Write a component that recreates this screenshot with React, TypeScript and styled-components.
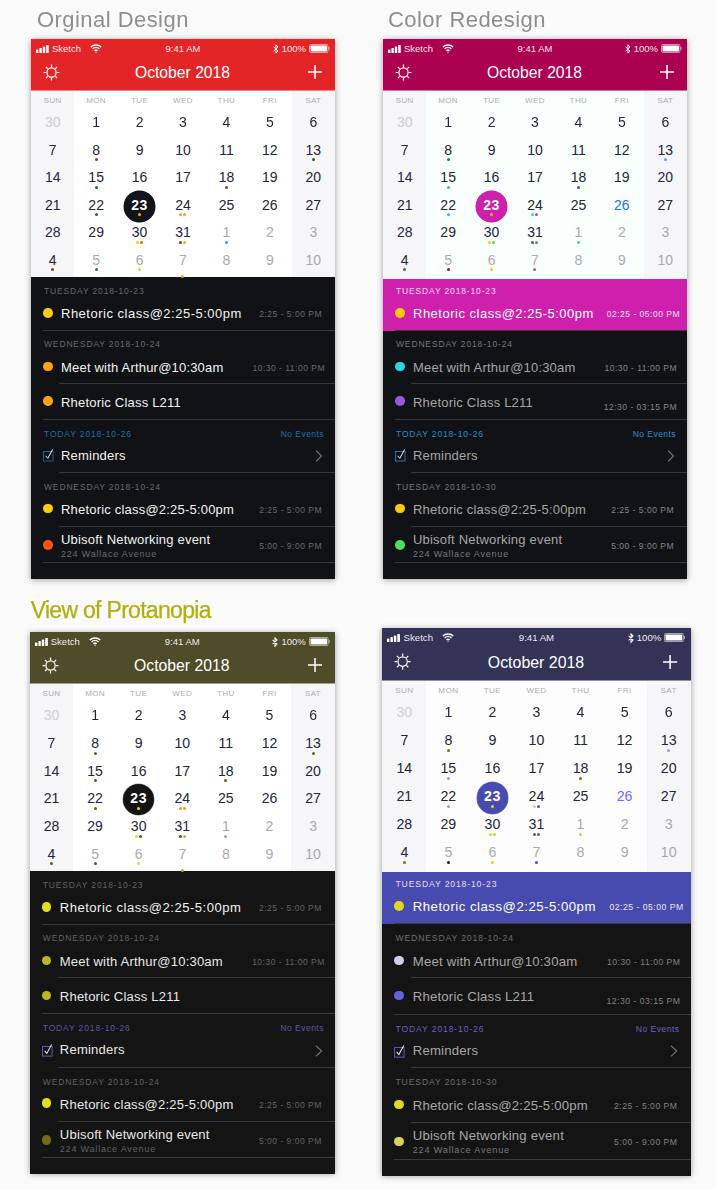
import React from 'react';
import styled, { createGlobalStyle, ThemeProvider } from 'styled-components';

type Palette = {
  bar: string;
  panel: string;
  line: string;
  accent: string;
  todayBg: string;
  todayRing: string;
  highlight: string;
  calBg: string;
  title: string;
  time: string;
  head: string;
  sub: string;
  check: string;
};

declare module 'styled-components' {
  export interface DefaultTheme extends Palette {}
}

const FONT = '"Liberation Sans", Arial, sans-serif';

const Global = createGlobalStyle`
  html, body { margin: 0; padding: 0; background: #fafafa; }
  body { font-family: ${FONT}; overflow: hidden; }
`;

const Page = styled.main`
  display: grid;
  grid-template-columns: 382px 1fr;
  grid-template-rows: 590px 600px;
  width: 716px;
  height: 1190px;
  background: #fafafa;
`;

const Cell = styled.section<{ $left: number; $top?: number }>`
  padding-left: ${p => p.$left}px;
  padding-top: ${p => p.$top ?? 0}px;
`;

const Heading = styled.h2<{ $indent: number }>`
  margin: 0 0 0 ${p => p.$indent}px;
  height: 39px;
  font-size: 22px;
  line-height: 40px;
  font-weight: 400;
  letter-spacing: 0.45px;
  color: #8e8e8e;
  filter: blur(0.3px);
`;

const LimeHeading = styled(Heading)`
  height: 42px;
  line-height: 40px;
  font-size: 23px;
  letter-spacing: -0.7px;
  color: #aeb00c;
  -webkit-text-stroke: 0.25px #aeb00c;
`;

const Phone = styled.article<{ $zoom: number; $blur: number }>`
  display: flex;
  flex-direction: column;
  width: 304px;
  height: 540px;
  overflow: hidden;
  zoom: ${p => p.$zoom};
  filter: blur(${p => p.$blur}px);
  box-shadow: 0 1px 6px rgba(0, 0, 0, 0.38);
`;

const TopBar = styled.header`
  background: ${p => p.theme.bar};
  color: #fff;
  border-bottom: 1px solid rgba(255, 255, 255, 0.45);
`;

const StatusBar = styled.div`
  display: grid;
  grid-template-columns: 1fr auto 1fr;
  align-items: center;
  height: 19px;
  padding: 0 5px 0 5px;
  font-size: 9.5px;
  color: rgba(255, 255, 255, 0.92);
`;

const StatusLeft = styled.div`
  display: flex;
  align-items: center;
  gap: 2px;
`;

const StatusRight = styled.div`
  display: flex;
  align-items: center;
  justify-content: flex-end;
  gap: 3px;
`;

const WifiSlot = styled.span`
  display: flex;
  margin-left: 7px;
`;

const Nav = styled.div`
  display: grid;
  grid-template-columns: 1fr auto 1fr;
  align-items: center;
  height: 28px;
  padding: 0 13px 4px 12px;
`;

const NavTitle = styled.h1`
  margin: 0;
  padding-top: 2px;
  font-size: 15.7px;
  font-weight: 400;
  line-height: 20px;
`;

const PlusSlot = styled.span`
  display: flex;
  justify-content: flex-end;
`;

const Calendar = styled.div<{ $last: number }>`
  display: grid;
  grid-template-columns: repeat(7, 1fr);
  grid-template-rows: 17px repeat(5, 27.6px) ${p => p.$last}px;
  flex: none;
`;

const Weekday = styled.div<{ $weekend: boolean }>`
  padding-top: 5px;
  text-align: center;
  font-size: 8px;
  line-height: 10px;
  letter-spacing: 0.4px;
  color: #adadb1;
  background: ${p => (p.$weekend ? '#f6f6f8' : p.theme.calBg)};
`;

const Day = styled.div<{ $weekend: boolean; $today: boolean }>`
  position: relative;
  z-index: ${p => (p.$today ? 1 : 0)};
  display: flex;
  flex-direction: column;
  align-items: center;
  padding-top: 4px;
  background: ${p => (p.$weekend ? '#f6f6f8' : p.theme.calBg)};

  ${p =>
    p.$today
      ? `&::before {
          content: '';
          position: absolute;
          left: 50%;
          top: 0;
          width: 31px;
          height: 31px;
          margin-left: -15.5px;
          border-radius: 50%;
          background: ${p.theme.todayBg};
          box-shadow: 0 0 0 0.5px ${p.theme.todayRing};
        }`
      : ''}
`;

const DayNum = styled.span<{ $tone: string; $today: boolean }>`
  position: relative;
  font-size: 14px;
  line-height: 20px;
  font-weight: ${p => (p.$today ? 700 : 400)};
  letter-spacing: ${p => (p.$today ? '0.5px' : '0')};
  color: ${p => p.$tone};
`;

const Marks = styled.span<{ $low: boolean }>`
  position: relative;
  display: flex;
  gap: 1px;
  height: 3px;
  margin-top: ${p => (p.$low ? 5 : -1.5)}px;
`;

const Mark = styled.i<{ $color: string }>`
  display: block;
  width: 3px;
  height: 3px;
  border-radius: 50%;
  background: ${p => p.$color};
`;

const Panel = styled.div`
  flex: 1;
  background: ${p => p.theme.panel};
`;

const Group = styled.div<{ $hot: boolean }>`
  background: ${p => (p.$hot ? p.theme.highlight : 'transparent')};
`;

const GroupHead = styled.div<{ $pad: number; $tone: string }>`
  display: flex;
  justify-content: space-between;
  padding: ${p => p.$pad}px 11px 0 13px;
  font-size: 8.5px;
  line-height: 14px;
  letter-spacing: 0.85px;
  color: ${p => p.$tone};
`;

const NoEvents = styled.span`
  letter-spacing: 0.45px;
`;

const Row = styled.div<{ $full: boolean }>`
  display: flex;
  margin-left: 12px;
  border-bottom: ${p => (p.$full ? `1px solid ${p.theme.line}` : 'none')};
`;

const Marker = styled.div<{ $top: number; $bottom: number }>`
  display: flex;
  align-items: center;
  flex: none;
  width: 16px;
  padding: ${p => p.$top}px 0 ${p => p.$bottom}px;
`;

const Dot = styled.span<{ $color: string }>`
  display: block;
  width: 9.5px;
  height: 9.5px;
  border-radius: 50%;
  background: ${p => p.$color};
`;

const Body = styled.div<{ $full: boolean; $top: number; $bottom: number }>`
  flex: 1;
  display: flex;
  align-items: center;
  justify-content: space-between;
  padding: ${p => p.$top}px 0 ${p => p.$bottom}px 2px;
  border-bottom: ${p => (p.$full ? 'none' : `1px solid ${p.theme.line}`)};
`;

const Texts = styled.div`
  display: flex;
  flex-direction: column;
`;

const Title = styled.span<{ $wide: boolean; $tone: string }>`
  font-size: 13px;
  line-height: 18px;
  letter-spacing: ${p => (p.$wide ? 0.5 : 0.2)}px;
  color: ${p => p.$tone};
  white-space: nowrap;
`;

const Sub = styled.span`
  font-size: 9px;
  line-height: 10px;
  letter-spacing: 0.8px;
  color: ${p => p.theme.sub};
`;

const Time = styled.span<{ $right: number; $drop: number; $tone: string }>`
  margin: 0 ${p => p.$right}px ${p => -p.$drop}px 0;
  padding-top: ${p => p.$drop}px;
  font-size: 8.5px;
  line-height: 12px;
  letter-spacing: 0.5px;
  color: ${p => p.$tone};
  white-space: nowrap;
`;

const ChevronSlot = styled.span`
  display: flex;
  margin-right: 12px;
`;

const Signal = () => (
  <svg width="14" height="8" viewBox="0 0 14 8" fill="#fff">
    <rect x="0" y="4.5" width="2.4" height="3.5" rx="0.6" />
    <rect x="3.4" y="3" width="2.4" height="5" rx="0.6" />
    <rect x="6.8" y="1.5" width="2.4" height="6.5" rx="0.6" />
    <rect x="10.2" y="0" width="2.6" height="8" rx="0.6" />
  </svg>
);

const Wifi = () => (
  <svg width="12" height="9" viewBox="0 0 12 9" fill="none" stroke="#fff" strokeWidth="1.3">
    <path d="M0.8 3 C3.6 0.3 8.4 0.3 11.2 3" />
    <path d="M2.6 4.9 C4.5 3.2 7.5 3.2 9.4 4.9" />
    <path d="M4.4 6.7 C5.3 5.9 6.7 5.9 7.6 6.7" />
    <circle cx="6" cy="8" r="0.7" fill="#fff" stroke="none" />
  </svg>
);

const Bluetooth = () => (
  <svg width="6" height="10" viewBox="0 0 6 10" fill="none" stroke="#fff" strokeWidth="1">
    <path d="M0.6 2.8 L5 7 L3 9.2 V0.8 L5 3 L0.6 7.2" />
  </svg>
);

const Battery = () => (
  <svg width="21" height="9" viewBox="0 0 21 9">
    <rect x="0.5" y="0.5" width="18.5" height="8" rx="1.5" fill="none" stroke="rgba(255,255,255,0.55)" />
    <rect x="1.5" y="1.5" width="16.5" height="6" rx="0.8" fill="#fff" />
    <rect x="19.6" y="3" width="1" height="3" fill="rgba(255,255,255,0.6)" />
  </svg>
);

const Sun = () => (
  <svg width="17" height="17" viewBox="0 0 17 17" fill="none" stroke="#fff" strokeWidth="1.2">
    <circle cx="8.5" cy="8.5" r="4.6" />
    <path d="M8.5 0.6 V3.2 M8.5 13.8 V16.4 M0.6 8.5 H3.2 M13.8 8.5 H16.4 M2.9 2.9 L4.8 4.8 M12.2 12.2 L14.1 14.1 M14.1 2.9 L12.2 4.8 M4.8 12.2 L2.9 14.1" />
  </svg>
);

const Plus = () => (
  <svg width="14" height="14" viewBox="0 0 14 14" fill="none" stroke="#fff" strokeWidth="1.5">
    <path d="M7 0 V14 M0 7 H14" />
  </svg>
);

const CheckBox = ({ color }: { color: string }) => (
  <svg width="12" height="14" viewBox="0 0 12 14" fill="none">
    <rect x="0.5" y="3.5" width="9.5" height="9.5" stroke={color} strokeWidth="1" />
    <path d="M2.6 7.8 L4.8 10.4 L9.6 1.4" stroke="#eee" strokeWidth="1" />
  </svg>
);

const Chevron = () => (
  <svg width="8" height="12" viewBox="0 0 8 12" fill="none" stroke="#6d7075" strokeWidth="1.2">
    <path d="M1 0.8 L6.6 6 L1 11.2" />
  </svg>
);

const WEEK = ['SUN', 'MON', 'TUE', 'WED', 'THU', 'FRI', 'SAT'];

const DAYS: { n: number; key: string; tone?: 'faint' | 'muted' }[] = [
  { n: 30, key: 's30', tone: 'faint' },
  ...Array.from({ length: 31 }, (_, i) => ({ n: i + 1, key: String(i + 1) })),
  { n: 1, key: 'n1', tone: 'muted' as const },
  { n: 2, key: 'n2', tone: 'muted' as const },
  { n: 3, key: 'n3', tone: 'muted' as const },
  { n: 4, key: 'n4' },
  { n: 5, key: 'n5', tone: 'muted' as const },
  { n: 6, key: 'n6', tone: 'muted' as const },
  { n: 7, key: 'n7', tone: 'muted' as const },
  { n: 8, key: 'n8', tone: 'muted' as const },
  { n: 9, key: 'n9', tone: 'muted' as const },
  { n: 10, key: 'n10', tone: 'muted' as const },
];

type Spec = {
  palette: Palette;
  redesign: boolean;
  zoom: number;
  blur: number;
  blue?: string;
  marks: Record<string, string[]>;
  dots: string[];
};

const marksFrom = (
  a: string, b: string, t: string, c24: string[], c30: string[], c31: string[],
  n1: string, n4: string, n5: string, n6: string, n7: string, c13: string,
): Record<string, string[]> => ({
  '8': [a], '13': [c13], '15': [b], '18': [a], '22': [b], '23': [t],
  '24': c24, '30': c30, '31': c31, n1: [n1], n4: [n4], n5: [n5], n6: [n6], n7: [n7],
});

const SPECS: Spec[] = [
  {
    palette: {
      bar: '#e42528', panel: '#101215', line: '#36383c', accent: '#1d6fae', todayBg: '#11141a', todayRing: '#11141a',
      highlight: '#cf1fad', calBg: '#ffffff', title: '#f2f2f2', time: '#68696d', head: '#68696d', sub: '#6a6b6f', check: '#1f5f96',
    },
    redesign: false, zoom: 1, blur: 0.25,
    marks: marksFrom('#7c4a0e', '#1f6b12', '#f7b500', ['#ffa40d', '#ffa40d'], ['#ffcc00', '#ff5a12'], ['#7c4a0e', '#ffa40d'], '#12a8f5', '#7c4a0e', '#2a55b5', '#ffcc00', '#ffa40d', '#1f6b12'),
    dots: ['#ffcc0d', '#ffa40d', '#ffa40d', '#ffcc0d', '#ff5211'],
  },
  {
    palette: {
      bar: '#ac0050', panel: '#101215', line: '#36383c', accent: '#2f8dd6', todayBg: '#cf1fad', todayRing: '#cf1fad',
      highlight: '#cf1fad', calBg: '#f8fffd', title: '#a6a6a6', time: '#858588', head: '#747578', sub: '#77787b', check: '#2a74b4',
    },
    redesign: true, zoom: 1, blur: 0.25, blue: '#1a6ff0',
    marks: marksFrom('#0a8a24', '#4aa8f5', '#ffa40d', ['#2ad5e8', '#9a55d8'], ['#ffc800', '#4ddc60'], ['#0a8a24', '#9a55d8'], '#4ddc60', '#0a8a24', '#b0004f', '#ffc800', '#9a55d8', '#4aa8f5'),
    dots: ['#ffc80d', '#2ad5e8', '#9a5ad8', '#ffc80d', '#4ddc60'],
  },
  {
    palette: {
      bar: '#4f4c2a', panel: '#141414', line: '#3a3a3c', accent: '#5a5aa8', todayBg: '#141414', todayRing: '#9a9a9a',
      highlight: '#474bb0', calBg: '#ffffff', title: '#e8e8e8', time: '#626265', head: '#626265', sub: '#626265', check: '#5a5ab4',
    },
    redesign: false, zoom: 1.004, blur: 0.5,
    marks: marksFrom('#6a6010', '#6a6010', '#e5dc20', ['#b8b820', '#b8b820'], ['#e0d820', '#5a5510'], ['#4a4610', '#b8b820'], '#9090ff', '#6a6010', '#4040c0', '#e5dc20', '#b0b020', '#6a6010'),
    dots: ['#e3dc22', '#bdb81f', '#bdb81f', '#e3dc22', '#716c12'],
  },
  {
    palette: {
      bar: '#333358', panel: '#141414', line: '#3a3a3c', accent: '#6264c4', todayBg: '#474bb0', todayRing: '#8a8ccc',
      highlight: '#474bb0', calBg: '#fdfdfd', title: '#a8a8a8', time: '#808083', head: '#6e6e70', sub: '#77777a', check: '#5a5ab4',
    },
    redesign: true, zoom: 1.0145, blur: 0.5, blue: '#6a6aff',
    marks: marksFrom('#7a7410', '#9a9aff', '#e0dc20', ['#c8c8e8', '#4a50d0'], ['#d8d030', '#d8d030'], ['#6a6410', '#4a50d0'], '#d0cc40', '#7a7410', '#1a1a40', '#d8d820', '#4a50d0', '#9a9aff'),
    dots: ['#dfd820', '#cfcfe8', '#6264d8', '#dfd820', '#d6d25a'],
  },
];

const PhoneView = ({ spec }: { spec: Spec }) => {
  const { palette: t, redesign, dots, marks } = spec;
  return (
    <ThemeProvider theme={t}>
      <Phone $zoom={spec.zoom} $blur={spec.blur}>
        <TopBar>
          <StatusBar>
            <StatusLeft>
              <Signal />
              <span>Sketch</span>
              <WifiSlot><Wifi /></WifiSlot>
            </StatusLeft>
            <span>9:41 AM</span>
            <StatusRight>
              <Bluetooth />
              <span>100%</span>
              <Battery />
            </StatusRight>
          </StatusBar>
          <Nav>
            <Sun />
            <NavTitle>October 2018</NavTitle>
            <PlusSlot><Plus /></PlusSlot>
          </Nav>
        </TopBar>

        <Calendar $last={redesign ? 33 : 31}>
          {WEEK.map((w, i) => (
            <Weekday key={w} $weekend={i === 0 || i === 6}>{w}</Weekday>
          ))}
          {DAYS.map((d, i) => {
            const col = i % 7;
            const today = d.key === '23';
            let tone = '#23253a';
            if (d.tone === 'faint') tone = '#cfcfd2';
            if (d.tone === 'muted') tone = '#a9a9ad';
            if (today) tone = '#ffffff';
            if (d.key === '26' && spec.blue) tone = spec.blue;
            const low = d.key === 'n7' && !redesign;
            return (
              <Day key={d.key} $weekend={col === 0 || col === 6} $today={today}>
                <DayNum $tone={tone} $today={today}>{d.n}</DayNum>
                {marks[d.key] && (
                  <Marks $low={low}>
                    {marks[d.key].map((c, j) => <Mark key={j} $color={c} />)}
                  </Marks>
                )}
              </Day>
            );
          })}
        </Calendar>

        <Panel>
          <Group $hot={redesign}>
            <GroupHead $pad={redesign ? 5 : 7} $tone={redesign ? '#f3dff0' : t.head}>
              <span>TUESDAY 2018-10-23</span>
            </GroupHead>
            <Row $full>
              <Marker $top={6} $bottom={8}><Dot $color={dots[0]} /></Marker>
              <Body $full $top={7} $bottom={7}>
                <Title $wide $tone={redesign ? '#ffffff' : '#f2f2f2'}>Rhetoric class@2:25-5:00pm</Title>
                {redesign
                  ? <Time $right={7} $drop={0} $tone="#f3e6f1">02:25 - 05:00 PM</Time>
                  : <Time $right={13} $drop={0} $tone={t.time}>2:25 - 5:00 PM</Time>}
              </Body>
            </Row>
          </Group>

          <Group $hot={false}>
            <GroupHead $pad={6} $tone={t.head}><span>WEDNESDAY 2018-10-24</span></GroupHead>
            <Row $full={false}>
              <Marker $top={6} $bottom={8}><Dot $color={dots[1]} /></Marker>
              <Body $full={false} $top={8} $bottom={6}>
                <Title $wide={false} $tone={t.title}>Meet with Arthur@10:30am</Title>
                <Time $right={10} $drop={0} $tone={t.time}>10:30 - 11:00 PM</Time>
              </Body>
            </Row>
            <Row $full>
              <Marker $top={8} $bottom={9}><Dot $color={dots[2]} /></Marker>
              <Body $full $top={10} $bottom={7}>
                <Title $wide={false} $tone={t.title}>Rhetoric Class L211</Title>
                {redesign && <Time $right={10} $drop={4} $tone={t.time}>12:30 - 03:15 PM</Time>}
              </Body>
            </Row>
          </Group>

          <Group $hot={false}>
            <GroupHead $pad={7} $tone={t.accent}>
              <span>TODAY 2018-10-26</span>
              <NoEvents>No Events</NoEvents>
            </GroupHead>
            <Row $full={false}>
              <Marker $top={5} $bottom={8}><CheckBox color={t.check} /></Marker>
              <Body $full={false} $top={6} $bottom={7}>
                <Title $wide={false} $tone={t.title}>Reminders</Title>
                <ChevronSlot><Chevron /></ChevronSlot>
              </Body>
            </Row>
          </Group>

          <Group $hot={false}>
            <GroupHead $pad={7} $tone={t.head}>
              <span>{redesign ? 'TUESDAY 2018-10-30' : 'WEDNESDAY 2018-10-24'}</span>
            </GroupHead>
            <Row $full={false}>
              <Marker $top={5} $bottom={9}><Dot $color={dots[3]} /></Marker>
              <Body $full={false} $top={7} $bottom={7}>
                <Title $wide={false} $tone={t.title}>Rhetoric class@2:25-5:00pm</Title>
                <Time $right={13} $drop={0} $tone={t.time}>2:25 - 5:00 PM</Time>
              </Body>
            </Row>
            <Row $full>
              <Marker $top={3} $bottom={2}><Dot $color={dots[4]} /></Marker>
              <Body $full $top={4} $bottom={3}>
                <Texts>
                  <Title $wide={false} $tone={t.title}>Ubisoft Networking event</Title>
                  <Sub>224 Wallace Avenue</Sub>
                </Texts>
                <Time $right={13} $drop={1} $tone={t.time}>5:00 - 9:00 PM</Time>
              </Body>
            </Row>
          </Group>
        </Panel>
      </Phone>
    </ThemeProvider>
  );
};

export default function App() {
  return (
    <>
      <Global />
      <Page>
        <Cell $left={31}>
          <Heading $indent={6}>Orginal Design</Heading>
          <PhoneView spec={SPECS[0]} />
        </Cell>
        <Cell $left={1}>
          <Heading $indent={5}>Color Redesign</Heading>
          <PhoneView spec={SPECS[1]} />
        </Cell>
        <Cell $left={29.7}>
          <LimeHeading $indent={1}>View of Protanopia</LimeHeading>
          <PhoneView spec={SPECS[2]} />
        </Cell>
        <Cell $left={0.3} $top={38.3}>
          <PhoneView spec={SPECS[3]} />
        </Cell>
      </Page>
    </>
  );
}
